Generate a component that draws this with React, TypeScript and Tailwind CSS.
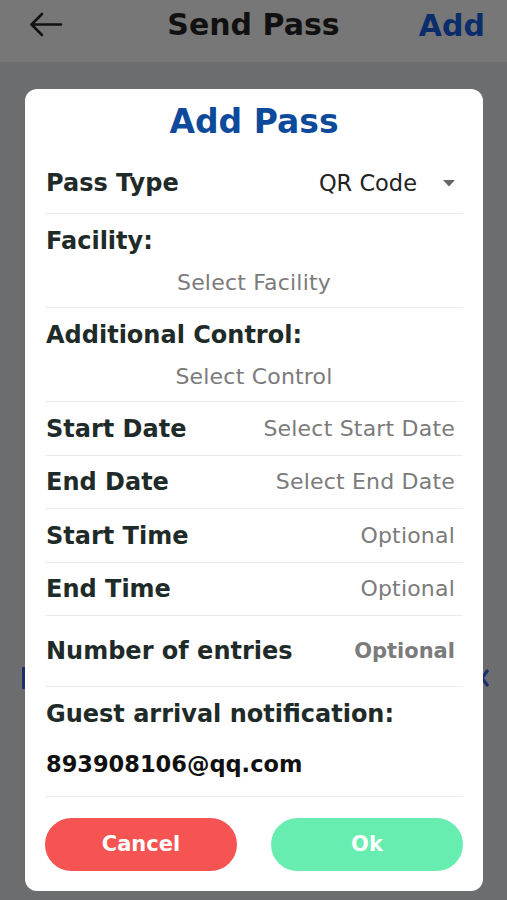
const font = "font-['DejaVu_Sans',sans-serif]";

function Row({ label, value, bold = false, h }: { label: string; value: string; bold?: boolean; h: string }) {
  return (
    <div className={`flex items-center justify-between border-b border-[#ebebeb] ${h}`}>
      <span className="pl-px text-[24px] font-bold leading-[30px] text-[#1f2b29]">{label}</span>
      <span
        className={`pr-2 leading-[30px] text-[#7b7b7b] ${bold ? 'text-[21px] font-bold' : 'text-[22px] tracking-[0.2px]'}`}
      >
        {value}
      </span>
    </div>
  );
}

function Block({ label, value }: { label: string; value: string }) {
  return (
    <div className="flex h-[94px] flex-col border-b border-[#ebebeb] pt-[12px]">
      <span className="pl-px text-[24px] font-bold leading-[30px] text-[#1f2b29]">{label}</span>
      <span className="mt-[12px] text-center text-[22px] leading-[30px] tracking-[0.2px] text-[#7b7b7b]">
        {value}
      </span>
    </div>
  );
}

export default function App() {
  return (
    <div className={`relative h-[900px] w-full overflow-hidden bg-[#6c6d6f] ${font}`}>
      <header className="relative flex h-[62px] items-center justify-center bg-[#777777]">
        <svg
          className="absolute left-[29px] top-[12px]"
          width="34"
          height="25"
          viewBox="0 0 34 25"
          fill="none"
          stroke="#111"
          strokeWidth="2.6"
          strokeLinecap="round"
          strokeLinejoin="round"
        >
          <path d="M32 12.5H3M13 2 2.5 12.5 13 23" />
        </svg>
        <span className="-mt-[14px] text-[30px] font-bold text-[#111]">Send Pass</span>
        <span className="absolute right-[22px] top-[3px] text-[30px] font-bold text-[#0b2d6c]">Add</span>
      </header>

      {/* page content behind the dialog, only its edges show */}
      <div className="mt-[605px] flex items-center justify-between">
        <div className="ml-[22px] h-[22px] w-[3px] bg-[#1b2d6e]" />
        <svg className="mr-[18px]" width="8" height="18" viewBox="0 0 8 18" fill="none" stroke="#1b2d6e" strokeWidth="3">
          <path d="M7 1 1 9l6 8" />
        </svg>
      </div>

      <div className="absolute left-[25px] top-[89px] w-[458px] rounded-[12px] bg-white px-5 pb-5">
        <div className="h-[64px] pt-[13px] text-center text-[33px] font-bold leading-[40px] text-[#0e4a9c]">
          Add Pass
        </div>
        <div className="flex h-[61px] items-center justify-between border-b border-[#ebebeb]">
          <span className="pl-px text-[24px] font-bold leading-[30px] text-[#1f2b29]">Pass Type</span>
          <div className="flex items-center pr-2">
            <span className="text-[22.5px] leading-[30px] text-[#222]">QR Code</span>
            <svg className="ml-[26px]" width="12" height="7" viewBox="0 0 12 7">
              <path d="M0 0h12L6 6.5z" fill="#666" />
            </svg>
          </div>
        </div>
        <Block label="Facility:" value="Select Facility" />
        <Block label="Additional Control:" value="Select Control" />
        <Row label="Start Date" value="Select Start Date" h="h-[54px]" />
        <Row label="End Date" value="Select End Date" h="h-[53px]" />
        <Row label="Start Time" value="Optional" h="h-[54px]" />
        <Row label="End Time" value="Optional" h="h-[53px]" />
        <Row label="Number of entries" value="Optional" bold h="h-[71px]" />
        <div className="flex h-[110px] flex-col border-b border-[#ebebeb] pt-[12px]">
          <span className="pl-px text-[24px] font-bold leading-[30px] text-[#1f2b29]">
            Guest arrival notification:
          </span>
          <span className="mt-[20px] pl-px text-[22.5px] font-bold leading-[30px] text-[#111]">
            893908106@qq.com
          </span>
        </div>
        <div className="mt-[21px] flex justify-between">
          <button
            type="button"
            className="flex h-[53px] w-[192px] items-center justify-center rounded-full bg-[#f65353] text-[21px] font-bold text-white"
          >
            Cancel
          </button>
          <button
            type="button"
            className="flex h-[53px] w-[192px] items-center justify-center rounded-full bg-[#68edb0] text-[21px] font-bold text-white"
          >
            Ok
          </button>
        </div>
      </div>
    </div>
  );
}
